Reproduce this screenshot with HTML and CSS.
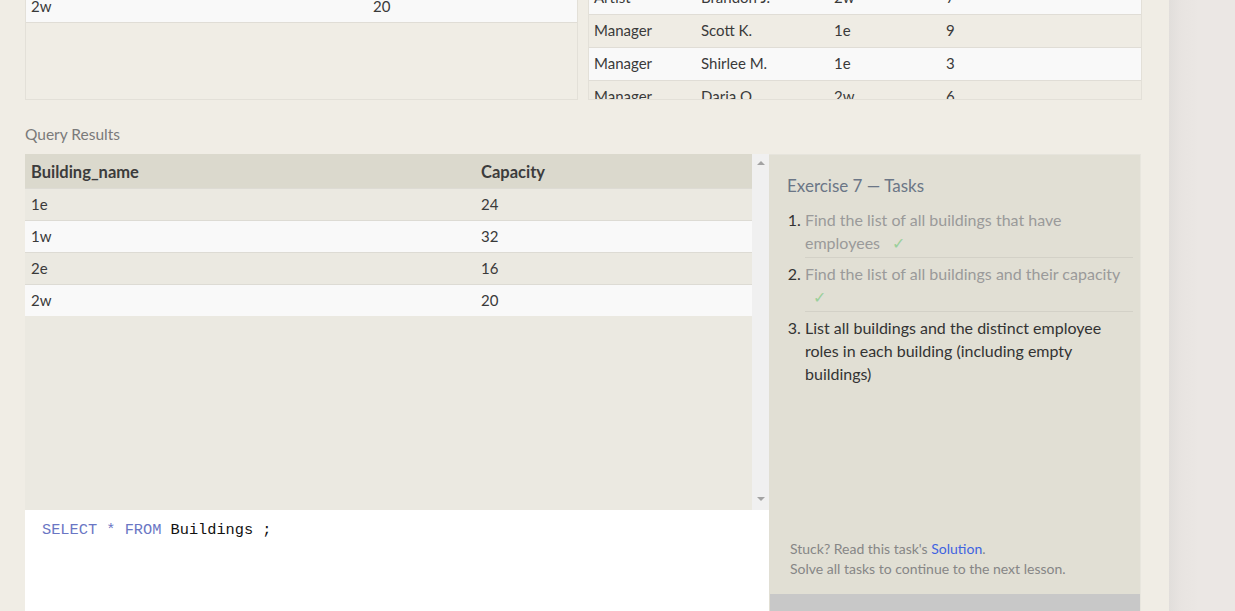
FILE: index.html
```html
<!DOCTYPE html>
<html lang="en">
<head>
<meta charset="utf-8">
<title>SQL Exercise 7</title>
<link rel="stylesheet" href="styles.css">
</head>
<body>
<div class="page">
  <main class="main">
    <section class="top">
      <div class="tbox tbox-left">
        <table class="data data-left">
          <tr class="light"><td class="c1">2w</td><td>20</td></tr>
        </table>
      </div>
      <div class="tbox tbox-right">
        <table class="data data-right">
          <tr class="light"><td class="r1">Artist</td><td class="r2">Brandon J.</td><td class="r3">2w</td><td>7</td></tr>
          <tr class="cream"><td>Manager</td><td>Scott K.</td><td>1e</td><td>9</td></tr>
          <tr class="light"><td>Manager</td><td>Shirlee M.</td><td>1e</td><td>3</td></tr>
          <tr class="cream"><td>Manager</td><td>Daria O.</td><td>2w</td><td>6</td></tr>
        </table>
      </div>
    </section>

    <div class="qr-label">Query Results</div>

    <section class="workspace">
      <div class="work-left">
        <div class="results">
          <div class="results-view">
            <table class="res">
              <thead>
                <tr><th class="rc1">Building_name</th><th>Capacity</th></tr>
              </thead>
              <tbody>
                <tr class="odd"><td>1e</td><td>24</td></tr>
                <tr class="even"><td>1w</td><td>32</td></tr>
                <tr class="odd"><td>2e</td><td>16</td></tr>
                <tr class="even"><td>2w</td><td>20</td></tr>
              </tbody>
            </table>
          </div>
          <div class="scrollbar">
            <span class="arrow arrow-up"></span>
            <span class="arrow arrow-down"></span>
          </div>
        </div>
        <div class="editor"><span class="kw">SELECT</span> <span class="op">*</span> <span class="kw">FROM</span> Buildings ;</div>
      </div>

      <aside class="exercise">
        <div class="ex-body">
          <h2 class="ex-title">Exercise 7 — Tasks</h2>
          <ol class="tasks">
            <li class="done">Find the list of all buildings that have employees <span class="check">✓</span></li>
            <li class="done">Find the list of all buildings and their capacity <span class="check">✓</span></li>
            <li class="current">List all buildings and the distinct employee roles in each building (including empty buildings)</li>
          </ol>
          <div class="ex-foot">
            <p>Stuck? Read this task's <a href="#" class="link">Solution</a>.</p>
            <p>Solve all tasks to continue to the next lesson.</p>
          </div>
        </div>
        <div class="ex-bar"></div>
      </aside>
    </section>
  </main>
  <div class="gutter"></div>
</div>
</body>
</html>
```

FILE: styles.css
```css
html, body {
  margin: 0;
  padding: 0;
  height: 611px;
  overflow: hidden;
}

body {
  background: #f0ede5;
  font-family: "Lato", "Liberation Sans", sans-serif;
  color: #333;
}

.page {
  display: flex;
  height: 611px;
}

.main {
  width: 1169px;
  flex: none;
  box-sizing: border-box;
  padding: 0 27px 0 25px;
}

.gutter {
  flex: 1;
  background: linear-gradient(to right, #e1dedb 0, #e8e4e1 12px, #ebe7e4 30px, #ebe7e4 100%);
}

/* Top tables */
.top {
  display: flex;
  gap: 10px;
}

.tbox {
  height: 100px;
  box-sizing: border-box;
  border: 1px solid #e3e0d8;
  border-top: none;
  overflow: hidden;
}

.tbox-left {
  width: 553px;
}

.tbox-right {
  width: 554px;
}

.data {
  width: 100%;
  border-collapse: collapse;
  font-size: 15px;
  color: #3a3a3a;
}

.data td {
  padding: 0 0 2px 5px;
  height: 30px;
  border-bottom: 1px solid #e0ddd6;
  text-align: left;
  vertical-align: middle;
}

.data-left {
  margin-top: -10px;
}

.data-left td {
  padding-bottom: 0;
  height: 32px;
}

.data-left .c1 {
  width: 337px;
}

.data-right {
  margin-top: -18px;
}

.data-right .r1 { width: 102px; }
.data-right .r2 { width: 128px; }
.data-right .r3 { width: 107px; }

.light { background: #f9f9f9; }
.cream { background: #efece4; }

/* Query results label */
.qr-label {
  margin-top: 24px;
  height: 30px;
  font-size: 15.5px;
  color: #7a7a7a;
  line-height: 20px;
}

/* Workspace */
.workspace {
  display: flex;
  height: 460px;
}

.work-left {
  width: 744px;
  flex: none;
  display: flex;
  flex-direction: column;
}

.results {
  height: 356px;
  display: flex;
  background: #ebe9e1;
}

.results-view {
  width: 727px;
  flex: none;
}

.res {
  width: 100%;
  border-collapse: collapse;
  font-size: 15px;
  color: #3a3a3a;
}

.res th {
  background: #dbd9cd;
  height: 33px;
  padding: 1px 0 0 6px;
  text-align: left;
  font-size: 16.5px;
  font-weight: 700;
  color: #3c3c3c;
}

.res .rc1 {
  width: 444px;
}

.res td {
  height: 30px;
  padding: 0 0 1px 6px;
  border-top: 1px solid #dddbd4;
  vertical-align: middle;
}

.res tr.odd { background: #ebe9e1; }
.res tr.even { background: #f9f9f9; }

.scrollbar {
  width: 17px;
  flex: none;
  background: #f0f0f0;
  display: flex;
  flex-direction: column;
  justify-content: space-between;
  align-items: center;
  padding: 7px 0 9px;
  box-sizing: border-box;
}

.arrow {
  width: 0;
  height: 0;
  border-left: 4px solid transparent;
  border-right: 4px solid transparent;
}

.arrow-up {
  border-bottom: 4px solid #a3a3a3;
}

.arrow-down {
  border-top: 4px solid #a3a3a3;
}

.editor {
  flex: 1;
  background: #ffffff;
  padding: 10px 0 0 17px;
  font-family: "Liberation Mono", "DejaVu Sans Mono", monospace;
  font-size: 15.3px;
  line-height: 20px;
  color: #111;
  white-space: pre;
}

.editor .kw,
.editor .op {
  color: #6a76c4;
}

/* Exercise panel */
.exercise {
  width: 372px;
  flex: none;
  display: flex;
  flex-direction: column;
  background: #e1dfd4;
  border-top: 1px solid #e6e4dc;
  border-right: 1px solid #e8e6de;
  box-sizing: border-box;
}

.ex-body {
  height: 439px;
  display: flex;
  flex-direction: column;
  padding: 20px 7px 0 18px;
  box-sizing: border-box;
}

.ex-title {
  margin: 0;
  font-size: 17px;
  font-weight: 400;
  line-height: 22px;
  color: #6b7686;
}

.tasks {
  margin: 11px 0 0;
  padding: 0 0 0 18px;
  font-size: 16px;
  line-height: 23px;
}

.tasks li {
  padding: 0 0 3px;
  margin-bottom: 4px;
  border-bottom: 1px solid #d3d1c7;
  color: #333;
}

.tasks li.done {
  color: #9a9a9a;
}

.tasks li.done::marker {
  color: #333;
}

.tasks li.current {
  border-bottom: none;
}

.check {
  color: #9bd09b;
  margin-left: 8px;
}

.ex-foot {
  margin-top: auto;
  padding: 0 0 15px 3px;
  font-size: 14px;
  line-height: 20px;
  color: #868686;
}

.ex-foot p {
  margin: 0;
}

.link {
  color: #3f63e0;
  text-decoration: none;
}

.ex-bar {
  flex: 1;
  background: #c8c8c8;
  margin-left: 1px;
}
```
